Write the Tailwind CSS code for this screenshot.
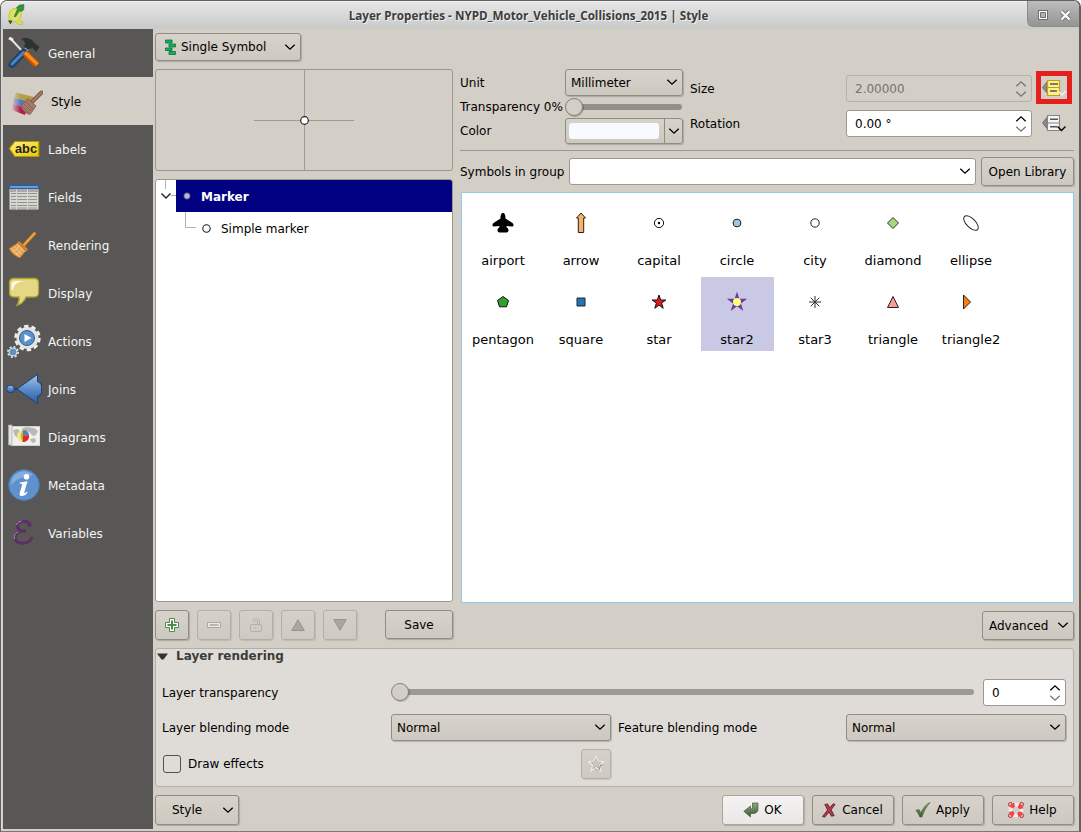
<!DOCTYPE html>
<html lang="en">
<head>
<meta charset="utf-8">
<title>Layer Properties</title>
<script src="https://cdn.jsdelivr.net/npm/@tailwindcss/browser@4"></script>
</head>
<body class="bg-white font-['DejaVu_Sans',sans-serif] text-[12px] leading-4 text-black">
<svg class="absolute w-0 h-0">
  <symbol id="down" viewBox="0 0 12 8"><path d="M1.300 1.700 6 6.200l4.700-4.500" fill="none" stroke="currentColor" stroke-width="1.300"/></symbol>
  <symbol id="up" viewBox="0 0 12 8"><path d="M1.300 6.300 6 1.800l4.700 4.500" fill="none" stroke="currentColor" stroke-width="1.300"/></symbol>
  <linearGradient id="steel" x2="0" y2="1"><stop stop-color="#a9c6ea"/><stop offset=".5" stop-color="#5a8cca"/><stop offset="1" stop-color="#2c5ca2"/></linearGradient>
  <linearGradient id="gold" x2="1" y2="1"><stop stop-color="#fff27a"/><stop offset="1" stop-color="#e6c800"/></linearGradient>
  <linearGradient id="moss" x2="0" y2="1"><stop stop-color="#8ba878"/><stop offset="1" stop-color="#3f5a35"/></linearGradient>
</svg>
<div class="w-[1081px] h-[832px] flex flex-col overflow-hidden rounded-t-[7px] border border-[#5f6163] border-b-[#77797b] bg-[#d3cec6] border-r-2">
  <!-- title bar -->
  <header class="h-7 shrink-0 flex bg-linear-to-b from-[#e6e6e6] to-[#c8c9c9] rounded-t-[6px] border-t border-[#f4f4f4]">
    <svg class="ml-[6px] mt-[2px] w-[18px] h-[22px]" viewBox="0 0 18 22">
      <path d="M8.500 4.500c-4.500 0-6.500 3.500-6.500 7.500 0 3.500 1.600 6 4.500 6 1 0 2-.3 2.600-.8.800 2 2.500 4 6.600 3.100l-.3-2.500c-1.700.2-3.300-.6-3.800-1.800 1.500-1.500 2.800-3.500 2.800-6 0-3.200-2-5.500-5.900-5.500z" fill="#e2e34c" stroke="#b9bc3a" stroke-width=".8"/>
      <path d="M8.500 8C7.200 8 6 9.500 6 12s.8 3.300 1.800 3.300 2.700-1.500 2.700-4.300-1-3-2-3z" fill="#d8dac0"/>
      <path d="M7 12.500 10.500 5l-1-1.500 3-2.500L17 .5l-.3 5.500-2.500 1.500-1.700-.5-4 6z" fill="#35913a" stroke="#237329" stroke-width=".5"/>
      <path d="M1 16.500l4.500 0-2 4z" fill="#3a4a2c"/>
    </svg>
    <h1 class="flex-1 pt-[4px] pl-[5px] text-center text-[11.700px] leading-[18px] font-bold text-[#3c3c3c] [text-shadow:1px_1px_0_#f0f0f0]" style="font-family:'Open Sans','Noto Sans',sans-serif">Layer Properties - NYPD_Motor_Vehicle_Collisions_2015 | Style</h1>
    <div class="w-[52px] h-[26px] -mt-px flex items-center gap-[12px] pl-[10px] pt-[3px] rounded-bl-[6px] rounded-tr-[6px] border-l border-b border-[#8c8c8c] bg-linear-to-b from-[#bdbdbd] to-[#949494]">
      <svg class="w-[10px] h-[10px]" viewBox="0 0 10 10"><path d="M0 0h10v10H0z" fill="#6f6f6f"/><path d="M1 1h8v8H1z" fill="#fff"/><path d="M2.500 2.500h5v5h-5z" fill="#b4b4b4" stroke="#6f6f6f"/></svg>
      <svg class="w-[11px] h-[11px]" viewBox="0 0 11 11"><path d="M1.500 1.500l8 8m0-8l-8 8" stroke="#757575" stroke-width="4"/><path d="M1.500 1.500l8 8m0-8l-8 8" stroke="#fff" stroke-width="2.200"/></svg>
    </div>
  </header>

  <div class="flex flex-1 min-h-0 pl-[2px] border-l border-[#d8d6d2]">
    <!-- page list -->
    <nav class="-ml-px w-[150px] h-[800px] shrink-0 bg-[#585755] text-[#f4f4f2] [&_span]:mt-[2px]">
      <div class="h-12 flex items-center pl-[5px] gap-[8px]">
        <svg class="w-8 h-8" viewBox="0 0 32 32">
          <path d="M2 1l14 15" stroke="#e4e4e4" stroke-width="2"/><path d="M1 1l4 2" stroke="#eee" stroke-width="3"/>
          <path d="M15 15l6-5" stroke="#cfcfcf" stroke-width="4"/>
          <path d="M13 1.500c6-1.500 11 0 14 5l4.500 3.500-3.500 5-3.500-4c-2 .5-3 1-4.500 2l-4-3.500c2-3 1-5.500-3-8z" fill="#2d3233"/>
          <path d="M16 15 4 27.500" stroke="#1d426f" stroke-width="7" stroke-linecap="round"/><path d="M15.500 15.500 4 27" stroke="#4b82c0" stroke-width="3" stroke-linecap="round"/>
          <path d="M16.500 15.500 29 28" stroke="#c25500" stroke-width="6.500"/><path d="M17 15.500 29.500 27.500" stroke="#ff8b1e" stroke-width="3.500"/>
        </svg><span>General</span></div>
      <div class="h-12 flex items-center pl-[8px] gap-[8px] bg-[#d3cec6] text-black">
        <svg class="w-8 h-8" viewBox="0 0 32 32">
          <defs><linearGradient id="fade"><stop stop-color="#fff" stop-opacity="0"/><stop offset=".3" stop-color="#fff"/></linearGradient><mask id="m"><path d="M0 0h32v32H0z" fill="url(#fade)"/></mask></defs>
          <g mask="url(#m)"><path d="M5 7.500l18 4.500-4 6-16-5z" fill="#b0a04a"/><path d="M3 13l16 4-3 6-14-4z" fill="#5278c4"/><path d="M2 19l14 4-2 7-13-5z" fill="#b01c48"/></g>
          <path d="M21 17l9.500-9.500" stroke="#7c5345" stroke-width="4" stroke-linecap="round"/><path d="M21.500 16.500l9-9" stroke="#a87b68" stroke-width="2.200" stroke-linecap="round"/>
          <path d="M17 13.500l8 7.500-6 8.500c-4-1-7-4-9.500-8z" fill="#a6796a" stroke="#805647" stroke-width=".8"/>
          <path d="M15 17l7 7m-9-5l7 7m-9-5l7 7" stroke="#7e5546" stroke-width=".7"/>
        </svg><span>Style</span></div>
      <div class="h-12 flex items-center pl-[5px] gap-[8px]">
        <svg class="w-8 h-8" viewBox="0 0 32 32"><path d="M1.400 15.500 6.800 8.500h24v15h-24z" fill="url(#gold)" stroke="#b89400" stroke-width="1.200"/><text x="7" y="19.500" font-family="Liberation Sans" font-weight="bold" font-size="12.500" textLength="22" lengthAdjust="spacingAndGlyphs" fill="#222">abc</text></svg><span>Labels</span></div>
      <div class="h-12 flex items-center pl-[5px] gap-[8px]">
        <svg class="w-8 h-8" viewBox="0 0 32 32"><path d="M1.500 3h29v25.500h-29z" fill="#d6d7d0"/><path d="M1.500 8h29v3h-29z" fill="#aaa"/><path d="M1 3h30v5H1z" fill="#2e5d9c"/><path d="M2 5h28v2H2z" fill="#6f9ace"/>
          <path d="M3 12.500h26M3 15.500h26M3 18.500h26M3 21.500h26M3 24.500h26M3 27h26" stroke="#96968f" stroke-width="1"/><path d="M8.500 8v20.500M19.500 8v20.500" stroke="#d6d7d0"/></svg><span>Fields</span></div>
      <div class="h-12 flex items-center pl-[5px] gap-[8px]">
        <svg class="w-8 h-8" viewBox="0 0 32 32"><path d="M15 17 26.500 4.500" stroke="#a8651c" stroke-width="4" stroke-linecap="round"/><path d="M15 17 26.500 4.500" stroke="#e8a54e" stroke-width="2.200" stroke-linecap="round"/>
          <path d="M11 13 19 20.500l-7 8.500C7 27.500 3 24 1 19.500z" fill="#e3a559" stroke="#a8651c"/><path d="M9 15l8 8M6 17l8 9M3 19l9 9M16 18 8 26M13 15l-8 8" stroke="#f4cf98" stroke-width=".7"/><path d="M11 12l9 8-2 3-9-9z" fill="#c98432"/></svg><span>Rendering</span></div>
      <div class="h-12 flex items-center pl-[5px] gap-[8px]">
        <svg class="w-8 h-8" viewBox="0 0 32 32"><path d="M6 1.500h20q4.500 0 4.500 4v10q0 4.500-4.500 4.500H18C16 25 13 27 9 28.500c2-3 2.500-5.500 2-8.500H6q-4.500 0-4.500-4.500v-10q0-4 4.500-4z" fill="#e4d887" stroke="#b5a22c" stroke-width="1.300"/><path d="M3.500 13V8q0-4 4-4h9.500C10 4.800 5.500 7 5 13z" fill="#fff" opacity=".9"/></svg><span>Display</span></div>
      <div class="h-12 flex items-center pl-[5px] gap-[8px]">
        <svg class="w-8 h-[34px] overflow-visible" viewBox="0 0 32 34"><circle cx="19.500" cy="14" r="11" fill="none" stroke="#ededeb" stroke-width="4.500" stroke-dasharray="4.100 2.800"/><circle cx="19.500" cy="14" r="9" fill="#5e8fca" stroke="#e4e4e2" stroke-width="4"/><circle cx="19" cy="14" r="7.500" fill="#5e90cc" stroke="#315f9b"/><path d="M16.500 10v8l7-4z" fill="#fff"/>
          <circle cx="5" cy="28" r="5" fill="none" stroke="#ddd" stroke-width="2" stroke-dasharray="2 1.900"/><circle cx="5" cy="28" r="4" fill="#5e90cc" stroke="#ddd"/></svg><span>Actions</span></div>
      <div class="h-12 flex items-center pl-[5px] gap-[8px]">
        <svg class="w-8 h-8 overflow-visible" viewBox="0 0 32 32"><path d="M9 16 29.500 1.500V9h2.500v2h1.500v10H32v2h-2.500v7.500z" fill="url(#steel)" stroke="#1c4278"/><path d="M5 16h5" stroke="#1c4278" stroke-width="2"/><circle cx="2.500" cy="16" r="3.800" fill="url(#steel)" stroke="#1c4278"/></svg><span>Joins</span></div>
      <div class="h-12 flex items-center pl-[5px] gap-[8px]">
        <svg class="w-8 h-8" viewBox="0 0 32 32"><path d="M3 5.500h29v19H3z" fill="#f0f0ec" stroke="#d2d2cc"/><path d="M13 8l5-2 8 1 4 3-2 4-3 1-4-4zM5 9l5-1 3 4-3 5-3-2zM22 18l5-1 1 4-4 1z" fill="#b7b9b3"/><path d="M.5 4h3.500v20H.5z" fill="#e4e4df" stroke="#aaa" stroke-width=".7"/><circle cx="15" cy="15" r="6" fill="#f3e68c"/><path d="M15 15V9a6 6 0 0 1 6 5z" fill="#4c80c0"/><path d="M15 15l6-1a6 6 0 0 1-7 7z" fill="#dc2c22"/><path d="M15 9v12c-3-3-3-9 0-12z" fill="#d4ad20"/></svg><span>Diagrams</span></div>
      <div class="h-12 flex items-center pl-[5px] gap-[8px]">
        <svg class="w-8 h-8" viewBox="0 0 32 32"><circle cx="16" cy="16" r="15.400" fill="#5f92cd" stroke="#4379b9"/><path d="M3 16a13 13 0 0 1 22-10C16 7 8 10 3 16z" fill="#85ade0"/><circle cx="18.500" cy="7.800" r="2.800" fill="#fff"/><path d="M12 13.500l7.500-1.200-3.200 11c-.3 1.400 1 .8 2.500-.8l.8.700C18 26 15.500 27.200 13.400 27c-1.700-.2-2.200-1.600-1.600-3.500l2.300-7.600c.2-1-.5-1.200-2.300-1.200z" fill="#fff"/></svg><span>Metadata</span></div>
      <div class="h-12 flex items-center pl-[5px] gap-[8px]">
        <svg class="w-8 h-8" viewBox="0 0 32 32"><path d="M22 8C20 3 9.500 3 9.500 9c0 4.500 4.500 5.500 8.500 5-6-.5-11 2-11 6.500 0 8 15.500 7.500 17-.5" fill="none" stroke="#5d2d66" stroke-width="3"/><path d="M6.500 22c-1-4 1-6 4-7M8.500 8c.8-2.500 3-3.700 5-4" fill="none" stroke="#b49abb" stroke-width="1"/><circle cx="21.500" cy="8" r="2" fill="#5d2d66"/></svg><span>Variables</span></div>
    </nav>

    <main class="ml-[2px] w-[919px] pt-1 flex flex-col">
      <button class="w-[146px] h-7 shrink-0 flex items-center pl-[9px] pr-[4px] rounded-[3px] border border-[#8f8d86] bg-linear-to-b from-[#d7d2ca] to-[#cdc8c0] shadow-[1px_1px_1px_rgba(0,0,0,.18)]">
        <svg class="w-[11px] h-4 mr-[5px]" viewBox="0 0 11 16"><g fill="#00b85c" stroke="#1a6b3c" stroke-width=".8"><path d="M.500 1h6.500v3H.5zM4 5h6.500v3H4zM.500 9h6.500v2.500H.5zM4 12.500h6.500v3H4z"/></g></svg>
        <span>Single Symbol</span><svg class="ml-auto w-3 h-2"><use href="#down"/></svg>
      </button>

      <div class="mt-2 flex h-[571px]">
        <!-- symbol tree -->
        <section class="w-[298px] flex flex-col">
          <div class="h-[102px] rounded-[3px] border border-[#9b9892]">
            <svg class="w-[296px] h-[100px]" viewBox="0 0 296 100"><path d="M148.500 0v100M98 50.500h100" stroke="#9c9ba0"/><circle cx="148.500" cy="50.500" r="3.800" fill="#fff" stroke="#222" stroke-width="1.200"/></svg>
          </div>
          <div class="mt-2 h-[423px] rounded-[3px] border border-[#9b9892] bg-white overflow-hidden [&_span]:mt-[2px]">
            <div class="h-8 flex">
              <svg class="w-5 h-8" viewBox="0 0 20 32"><path d="M9.500 0v9M15 15.500h5" stroke="#b4b2ae"/><path d="M5.500 13.500l4.500 4.500 4.500-4.500" fill="none" stroke="#222" stroke-width="1.400"/></svg>
              <div class="flex-1 flex items-center bg-[#000080] text-white font-bold pl-[7px]">
                <svg class="w-2 h-2 mr-[10px]" viewBox="0 0 8 8"><circle cx="4" cy="4" r="3.400" fill="#b4b4de" stroke="#10103c" stroke-width=".8"/></svg><span>Marker</span>
              </div>
            </div>
            <div class="h-8 flex items-center">
              <svg class="w-10 h-8" viewBox="0 0 40 32"><path d="M29.500 0v15.500H40" fill="none" stroke="#b4b2ae"/></svg>
              <svg class="w-[9px] h-[9px] ml-[6px] mr-[10px]" viewBox="0 0 9 9"><circle cx="4.500" cy="4.500" r="3.700" fill="#fff" stroke="#222" stroke-width="1.100"/></svg><span>Simple marker</span>
            </div>
          </div>
          <div class="mt-2 flex gap-2 h-[30px]">
            <button class="w-[34px] flex items-center justify-center rounded-[3px] border border-[#8f8d86] bg-linear-to-b from-[#d7d2ca] to-[#cdc8c0] shadow-[1px_1px_1px_rgba(0,0,0,.18)]"><svg class="w-[14px] h-[14px]" viewBox="0 0 14 14"><path d="M4.500.500h5v4h4v5h-4v4h-5v-4h-4v-5h4z" fill="#fff" stroke="#4d8c4a"/><path d="M7 2.500v9M2.500 7h9" stroke="#4d8c4a" stroke-width="2"/></svg></button>
            <button class="w-[34px] flex items-center justify-center rounded-[3px] border border-[#b3afa8] bg-linear-to-b from-[#d5d0c8] to-[#cec9c1] shadow-[1px_1px_1px_rgba(0,0,0,.1)]"><svg class="w-[14px] h-[6px]" viewBox="0 0 14 6"><path d="M.5.500h13v5H.5z" fill="#eceae6" stroke="#aaa79f"/><path d="M2.500 3h9" stroke="#aaa79f" stroke-width="1.500"/></svg></button>
            <button class="w-[34px] flex items-center justify-center rounded-[3px] border border-[#b3afa8] bg-linear-to-b from-[#d5d0c8] to-[#cec9c1] shadow-[1px_1px_1px_rgba(0,0,0,.1)]"><svg class="w-[14px] h-4" viewBox="0 0 14 16"><g fill="none" stroke="#b4b0a9"><rect x="1.500" y="7.500" width="11" height="7" rx="1.500"/><path d="M4 3.500C5 .8 10 .8 10.500 4v3M5.500 4.500C6 3 8.500 3 8.500 5v2M3.500 3.500l2 1M6 10v2"/></g></svg></button>
            <button class="w-[34px] flex items-center justify-center rounded-[3px] border border-[#b3afa8] bg-linear-to-b from-[#d5d0c8] to-[#cec9c1] shadow-[1px_1px_1px_rgba(0,0,0,.1)]"><svg class="w-[14px] h-3" viewBox="0 0 14 12"><path d="M7 .8 13.300 11.500H.7z" fill="#aaa79f" stroke="#97948d"/></svg></button>
            <button class="w-[34px] flex items-center justify-center rounded-[3px] border border-[#b3afa8] bg-linear-to-b from-[#d5d0c8] to-[#cec9c1] shadow-[1px_1px_1px_rgba(0,0,0,.1)]"><svg class="w-[14px] h-3" viewBox="0 0 14 12"><path d="M7 11.200 13.300.5H.7z" fill="#aaa79f" stroke="#97948d"/></svg></button>
            <button class="ml-auto w-[68px] h-[29px] rounded-[3px] border border-[#8f8d86] bg-linear-to-b from-[#d7d2ca] to-[#cdc8c0] shadow-[1px_1px_1px_rgba(0,0,0,.18)]">Save</button>
          </div>
        </section>

        <!-- symbol settings -->
        <section class="ml-[7px] w-[614px] flex flex-col">
          <div class="flex h-[81px]">
            <div class="w-[105px] flex flex-col whitespace-nowrap">
              <span class="mt-[5px] h-6 leading-[18px]">Unit</span><span class="h-6 leading-[18px]">Transparency 0%</span><span class="leading-[18px]">Color</span>
            </div>
            <div class="w-[118px] flex flex-col">
              <div class="h-[27px] flex items-center pl-[5px] pr-[4px] rounded-[3px] border border-[#8f8d86] bg-linear-to-b from-[#d7d2ca] to-[#cdc8c0] shadow-[1px_1px_1px_rgba(0,0,0,.18)]"><span>Millimeter</span><svg class="ml-auto w-3 h-2 mb-[2px]"><use href="#down"/></svg></div>
              <div class="h-[22px] flex items-center">
                <div class="relative z-10 w-[18px] h-[18px] shrink-0 rounded-full border border-[#85827b] bg-[#d3cec6] shadow-[1px_1px_1px_rgba(0,0,0,.2)]"></div>
                <div class="-ml-1 flex-1 h-[6px] mr-px rounded-full bg-[#939089]"></div>
              </div>
              <div class="h-[26px] flex rounded-[3px] border border-[#8f8d86] bg-linear-to-b from-[#d7d2ca] to-[#cdc8c0] shadow-[1px_1px_1px_rgba(0,0,0,.18)]">
                <div class="m-[4px] mb-0 ml-[3px] w-[90px] h-4 rounded-[3px] bg-[#f7faff]"></div>
                <div class="ml-auto w-[18px] border-l border-[#8f8d86] flex items-center justify-center"><svg class="w-3 h-2"><use href="#down"/></svg></div>
              </div>
            </div>
            <div class="ml-[7px] w-[156px] flex flex-col pt-[12px] gap-[19px]"><span>Size</span><span>Rotation</span></div>
            <div class="w-[186px] flex flex-col pt-[6px] gap-2">
              <div class="h-[27px] flex items-center pl-2 pr-[4px] rounded-[3px] border border-[#b5b1aa] text-[#76736e]"><span>2.00000</span><div class="ml-auto flex flex-col gap-[2px]"><svg class="w-3 h-2"><use href="#up"/></svg><svg class="w-3 h-2"><use href="#down"/></svg></div></div>
              <div class="h-[27px] flex items-center pl-2 pr-[4px] rounded-[3px] border border-[#9b9892] bg-white"><span>0.00 °</span><div class="ml-auto flex flex-col gap-[2px]"><svg class="w-3 h-2"><use href="#up"/></svg><svg class="w-3 h-2 text-[#777]"><use href="#down"/></svg></div></div>
            </div>
            <div class="ml-1 w-9 flex flex-col pt-[2px]">
              <div class="h-[33px] border-[5px] border-[#e5201c] flex items-center pl-[1px]"><svg class="w-6 h-[18px] overflow-visible" viewBox="0 0 24 18"><path d="M.500 8.500 5 3v11z" fill="#8c8c90" stroke="#707074"/><path d="M5.500 1.500h12v15h-12zM5.500 8.500h12" fill="#fdf08e" stroke="#c4a10c" stroke-width="1.200"/><path d="M8 5h8M8 12h7" stroke="#555" stroke-width="1.500"/><path d="M16.500 12.500l3.500 3.500 4-4" fill="none" stroke="#f4f2ee" stroke-width="1.500"/></svg></div>
              <div class="mt-[10px] pl-[6px]"><svg class="w-6 h-[18px] overflow-visible" viewBox="0 0 24 18"><path d="M.500 9 5 3.500v11z" fill="#8c8c90" stroke="#707074"/><path d="M5.500 1.500h12v15h-12zM5.500 9h12" fill="#f4f4f4" stroke="#858585" stroke-width="1.100"/><path d="M8 5.300h8M8 12.700h7" stroke="#555" stroke-width="1.500"/><path d="M15.500 12.500l4 4 4-4" fill="none" stroke="#000" stroke-width="1.400"/></svg></div>
            </div>
          </div>
          <div class="h-px bg-[#9b9892]"></div>
          <div class="mt-[6px] flex items-center h-[29px]">
            <span class="w-[109px] whitespace-nowrap">Symbols in group</span>
            <div class="w-[407px] h-[27px] flex items-center justify-end pr-[4px] rounded-[3px] border border-[#9b9892] bg-white"><svg class="w-3 h-2 mb-[2px]"><use href="#down"/></svg></div>
            <button class="ml-[5px] w-[93px] h-[29px] whitespace-nowrap rounded-[3px] border border-[#8f8d86] bg-linear-to-b from-[#d7d2ca] to-[#cdc8c0] shadow-[1px_1px_1px_rgba(0,0,0,.18)]">Open Library</button>
          </div>
          <div class="mt-[6px] ml-px h-[411px] border border-[#8fcbea] bg-white pt-[4px] pl-[2px]">
            <div class="grid grid-cols-[repeat(7,78px)] auto-rows-[79px] text-center text-[13px] [&_span]:mt-[18px]">
              <div class="flex flex-col items-center pt-[14px]"><svg class="w-6 h-6" viewBox="0 0 24 24"><path d="M12 2c1.500 0 2.500 1.500 2.500 5.500l7 4.500c1.500 1.200 1.300 3.500 0 3.500l-6-.500.300 1.500c2.500 1.500 2.200 5-.300 5h-7c-2.500 0-2.800-3.500-.300-5l.300-1.500-6 .5c-1.300 0-1.500-2.300 0-3.500l7-4.500C9.500 3.500 10.500 2 12 2z"/></svg><span>airport</span></div>
              <div class="flex flex-col items-center pt-[14px]"><svg class="w-6 h-6" viewBox="0 0 24 24"><path d="M12 2l4.500 5h-1.800v14.500H9.300V7H7.500z" fill="#f9b367" stroke="#222"/></svg><span>arrow</span></div>
              <div class="flex flex-col items-center pt-[14px]"><svg class="w-6 h-6" viewBox="0 0 24 24"><circle cx="12" cy="12" r="4.600" fill="#fff" stroke="#111"/><circle cx="12" cy="12" r="1.200"/></svg><span>capital</span></div>
              <div class="flex flex-col items-center pt-[14px]"><svg class="w-6 h-6" viewBox="0 0 24 24"><circle cx="12" cy="12" r="3.800" fill="#9dc8df" stroke="#222" stroke-width="1.100"/></svg><span>circle</span></div>
              <div class="flex flex-col items-center pt-[14px]"><svg class="w-6 h-6" viewBox="0 0 24 24"><circle cx="12" cy="12" r="4.200" fill="#fff" stroke="#222"/></svg><span>city</span></div>
              <div class="flex flex-col items-center pt-[14px]"><svg class="w-6 h-6" viewBox="0 0 24 24"><path d="M12 6.500l5.500 5.500-5.500 5.500-5.500-5.500z" fill="#a6d97c" stroke="#333"/></svg><span>diamond</span></div>
              <div class="flex flex-col items-center pt-[14px]"><svg class="w-6 h-6" viewBox="0 0 24 24"><ellipse cx="12" cy="12" rx="9.300" ry="4.500" transform="rotate(45 12 12)" fill="#fff" stroke="#222"/></svg><span>ellipse</span></div>
              <div class="flex flex-col items-center pt-[14px]"><svg class="w-6 h-6" viewBox="0 0 24 24"><path d="M12 6.500l5.500 4-2 6.300h-7l-2-6.300z" fill="#34a02c" stroke="#111"/></svg><span>pentagon</span></div>
              <div class="flex flex-col items-center pt-[14px]"><svg class="w-6 h-6" viewBox="0 0 24 24"><path d="M8 8h8v8H8z" fill="#1f78b4" stroke="#222"/></svg><span>square</span></div>
              <div class="flex flex-col items-center pt-[14px]"><svg class="w-6 h-6" viewBox="0 0 24 24"><path d="M12 5l1.700 5h5.100l-4.200 3.100 1.600 5.200-4.200-3.200-4.200 3.200 1.600-5.200L5.200 10h5.100z" fill="#e31a1c" stroke="#111"/></svg><span>star</span></div>
              <div class="mx-auto mt-px w-[73px] h-[74px] flex flex-col items-center bg-[#cac9e5] pt-[13px]"><svg class="w-6 h-6" viewBox="0 0 24 24"><path d="M12 1.500l2.300 7.200h7.900l-6.300 4.700 2.400 7.600-6.300-4.700L5.700 21l2.400-7.600-6.300-4.700h7.900z" fill="#6a3d9a"/><circle cx="12" cy="12" r="4" fill="#ffff79"/></svg><span>star2</span></div>
              <div class="flex flex-col items-center pt-[14px]"><svg class="w-6 h-6" viewBox="0 0 24 24"><path d="M12 6v12M6 12h12M7.700 7.700l8.600 8.600M16.300 7.700l-8.600 8.600" stroke="#333"/></svg><span>star3</span></div>
              <div class="flex flex-col items-center pt-[14px]"><svg class="w-6 h-6" viewBox="0 0 24 24"><path d="M12 6.500l5.500 11h-11z" fill="#fb9a99" stroke="#222"/></svg><span>triangle</span></div>
              <div class="flex flex-col items-center pt-[14px]"><svg class="w-6 h-6" viewBox="0 0 24 24"><path d="M4.500 5l7 7-7 7z" fill="#ff7f00" stroke="#222"/></svg><span>triangle2</span></div>
            </div>
          </div>
          <button class="mt-2 self-end w-[92px] h-[29px] shrink-0 flex items-center pl-[6px] pr-[4px] rounded-[3px] border border-[#8f8d86] bg-linear-to-b from-[#d7d2ca] to-[#cdc8c0] shadow-[1px_1px_1px_rgba(0,0,0,.18)]"><span>Advanced</span><svg class="ml-auto w-3 h-2 mb-px"><use href="#down"/></svg></button>
        </section>
      </div>

      <!-- layer rendering -->
      <section class="mt-2 h-[139px] shrink-0 rounded-[3px] border border-[#b3b0ab] bg-[#dfdcd7] pl-[6px] pr-[7px]">
        <div class="-ml-[5px] flex items-center h-[14px] font-bold text-[#3c3c3c]"><svg class="w-[11px] h-[7px] mr-[8px]" viewBox="0 0 11 7"><path d="M0 .500h11L6.500 6.500h-2z" fill="#333"/></svg><span>Layer rendering</span></div>
        <div class="mt-[16px] flex items-center h-[27px]">
          <span class="w-[229px]">Layer transparency</span>
          <div class="relative z-10 mb-px w-[18px] h-[18px] shrink-0 rounded-full border border-[#85827b] bg-[#d3cec6] shadow-[1px_1px_1px_rgba(0,0,0,.2)]"></div>
          <div class="-ml-1 mb-px w-[569px] h-[6px] rounded-full bg-[#9c9a95]"></div>
          <div class="ml-auto w-[83px] h-[27px] flex items-center pl-2 pr-[4px] rounded-[3px] border border-[#9b9892] bg-white"><span>0</span><div class="ml-auto flex flex-col gap-[2px]"><svg class="w-3 h-2"><use href="#up"/></svg><svg class="w-3 h-2 text-[#777]"><use href="#down"/></svg></div></div>
        </div>
        <div class="mt-2 flex items-center h-[27px]">
          <span class="w-[229px]">Layer blending mode</span>
          <div class="w-[220px] h-[27px] flex items-center pl-[5px] pr-[4px] rounded-[3px] border border-[#8f8d86] bg-linear-to-b from-[#d7d2ca] to-[#cdc8c0] shadow-[1px_1px_1px_rgba(0,0,0,.18)]"><span>Normal</span><svg class="ml-auto w-3 h-2 mb-[2px]"><use href="#down"/></svg></div>
          <span class="ml-[7px] whitespace-nowrap">Feature blending mode</span>
          <div class="ml-auto w-[220px] h-[27px] flex items-center pl-[5px] pr-[4px] rounded-[3px] border border-[#8f8d86] bg-linear-to-b from-[#d7d2ca] to-[#cdc8c0] shadow-[1px_1px_1px_rgba(0,0,0,.18)]"><span>Normal</span><svg class="ml-auto w-3 h-2 mb-[2px]"><use href="#down"/></svg></div>
        </div>
        <div class="mt-2 flex items-center h-[30px]">
          <div class="ml-px w-[18px] h-[18px] rounded-[3px] border border-[#55534f]"></div><span class="ml-[7px] w-[393px]">Draw effects</span>
          <button class="w-[30px] h-[30px] flex items-center justify-center rounded-[3px] border border-[#b3afa8] bg-linear-to-b from-[#d5d0c8] to-[#cec9c1] shadow-[1px_1px_1px_rgba(0,0,0,.1)]"><svg class="w-4 h-4" viewBox="0 0 16 16"><path d="M8 1l1.900 4.500 5 .500-3.800 3.200L12.500 14 8 11.500 3.500 14l1.400-4.800L1 6l5-.500z" fill="#cac6bf" stroke="#f0eeea" stroke-width="1.600"/><path d="M8 2.500l1.400 3.500 3.800.400-2.900 2.500 1 3.800L8 10.500l-3.300 2.200 1-3.800L2.800 6.400 6.600 6z" fill="#cbc7c0" stroke="#b4b0a9" stroke-width=".8"/><path d="M11 14l1.500-5 2 0M7 12.500l2 2" fill="none" stroke="#8e8b84"/></svg></button>
        </div>
      </section>

      <!-- dialog buttons -->
      <footer class="mt-2 flex h-[30px] shrink-0 gap-2">
        <button class="mr-auto w-[84px] flex items-center pl-4 pr-[4px] rounded-[3px] border border-[#8f8d86] bg-linear-to-b from-[#d7d2ca] to-[#cdc8c0] shadow-[1px_1px_1px_rgba(0,0,0,.18)]"><span>Style</span><svg class="ml-auto w-3 h-2"><use href="#down"/></svg></button>
        <button class="w-[82px] flex items-center justify-center gap-[5px] pr-px rounded-[3px] border border-[#a8a59f] bg-linear-to-b from-[#f4f3f1] to-[#e9e8e6] shadow-[1px_1px_1px_rgba(0,0,0,.18)]"><svg class="w-4 h-4" viewBox="0 0 16 16"><path d="M9.500 1H15v6c0 3-2 4.500-5 4.500H7.500V15L.800 9.300 7.500 4v3c1.500 0 2-.400 2-2z" fill="url(#moss)" stroke="#435a3a" stroke-width=".7"/></svg><span>OK</span></button>
        <button class="w-[82px] flex items-center justify-center gap-[5px] pr-px rounded-[3px] border border-[#8f8d86] bg-linear-to-b from-[#d7d2ca] to-[#cdc8c0] shadow-[1px_1px_1px_rgba(0,0,0,.18)]"><svg class="w-[15px] h-[15px]" viewBox="0 0 16 16"><path d="M3 1.500l3-.500 2.200 4L12 .800l2 .700-4.300 5.700 3.300 6.300-3 .500-2.500-4.500L3 15l-2.500-.500L6 7.500z" fill="#b03a4c" stroke="#5f1c28" stroke-width=".9"/></svg><span>Cancel</span></button>
        <button class="w-[82px] flex items-center justify-center gap-[5px] pr-px rounded-[3px] border border-[#8f8d86] bg-linear-to-b from-[#d7d2ca] to-[#cdc8c0] shadow-[1px_1px_1px_rgba(0,0,0,.18)]"><svg class="w-4 h-4" viewBox="0 0 16 16"><path d="M.800 8.500l3-1.200 2 3.500C8 6 11 2.500 15 .500 11.500 4.500 8.500 9.500 7 15H4.800C4 12.500 2.500 10 .8 8.500z" fill="url(#moss)" stroke="#4c6840" stroke-width=".7"/></svg><span>Apply</span></button>
        <button class="w-[82px] flex items-center justify-center gap-[5px] pr-px rounded-[3px] border border-[#8f8d86] bg-linear-to-b from-[#d7d2ca] to-[#cdc8c0] shadow-[1px_1px_1px_rgba(0,0,0,.18)]"><svg class="w-4 h-4 overflow-visible" viewBox="0 0 16 16"><g fill="none" stroke="#b52a2a"><circle cx="2.500" cy="2.500" r="2"/><circle cx="13.500" cy="2.500" r="2"/><circle cx="2.500" cy="13.500" r="2"/><circle cx="13.500" cy="13.500" r="2"/></g><circle cx="8" cy="8" r="5.500" fill="none" stroke="#ecebea" stroke-width="4"/><circle cx="8" cy="8" r="5.500" fill="none" stroke="#f04848" stroke-width="4.500" stroke-dasharray="4.400 4.240" stroke-dashoffset="-2.100"/></svg><span>Help</span></button>
      </footer>
    </main>
  </div>
</div>
</body>
</html>
